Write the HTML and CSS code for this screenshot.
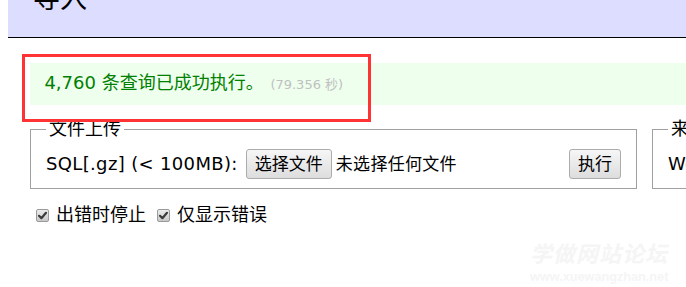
FILE: index.html
```html
<!DOCTYPE html>
<html lang="zh-CN">
<head>
<meta charset="utf-8">
<title>导入</title>
<link rel="stylesheet" href="styles.css">
</head>
<body>
<h2 class="title">导入</h2>
<div class="content">
  <div class="message">4,760 条查询已成功执行。 <span class="time">(79.356 秒)</span></div>
  <div class="forms">
    <fieldset class="box box-upload">
      <legend>文件上传</legend>
      <div class="row">
        <span class="label">SQL[.gz] (&lt; 100MB):</span>
        <span class="btn btn-file">选择文件</span>
        <span class="nofile">未选择任何文件</span>
        <span class="btn btn-run">执行</span>
      </div>
    </fieldset>
    <fieldset class="box box-server">
      <legend>来自服务器</legend>
      <div class="row">
        <span class="label">Webserver file adminer.sql</span>
      </div>
    </fieldset>
  </div>
  <div class="options">
    <span class="cb"><svg viewBox="0 0 13 13" width="13" height="13"><path d="M3 6.8 L5.4 9.2 L10 3.8" fill="none" stroke="#3c3c3c" stroke-width="2.2" stroke-linecap="round" stroke-linejoin="round"/></svg></span>
    <span class="opt">出错时停止</span>
    <span class="cb"><svg viewBox="0 0 13 13" width="13" height="13"><path d="M3 6.8 L5.4 9.2 L10 3.8" fill="none" stroke="#3c3c3c" stroke-width="2.2" stroke-linecap="round" stroke-linejoin="round"/></svg></span>
    <span class="opt">仅显示错误</span>
  </div>
</div>
<div class="annotation"></div>
<div class="watermark">
  <div class="wm-cn">学做网站论坛</div>
  <div class="wm-url">www.xuewangzhan.net</div>
</div>
</body>
</html>
```
FILE: styles.css
```css
html, body {
  margin: 0;
  padding: 0;
  overflow: hidden;
}
body {
  width: 686px;
  height: 287px;
  position: relative;
  background: #fff;
  color: #000;
  font-family: "DejaVu Sans", "Noto Sans CJK SC", sans-serif;
  font-size: 18px;
  line-height: 22.5px;
}
.title {
  margin: -40px 0 0 8px;
  padding: 21.6px 25px;
  font-size: 27px;
  line-height: 33.75px;
  font-weight: normal;
  background: #ddf;
  border-bottom: 1px solid #000;
}
.content {
  padding-left: 30px;
}
.message {
  margin-top: 25px;
  padding: 9px 14.4px;
  background: #efe;
  color: #008000;
  white-space: nowrap;
}
.time {
  color: #c0c0c0;
  font-size: 13px;
  margin-left: 1px;
}
.forms {
  display: flex;
  gap: 15px;
  margin-top: 13px;
  white-space: nowrap;
}
.box {
  margin: 0;
  padding: 8px 15px 9.5px;
  border: 1px solid #a0a0a0;
  box-sizing: border-box;
  min-width: 0;
  flex: none;
}
.box legend {
  padding: 0 3px;
  line-height: 22.5px;
}
.box-upload {
  width: 607px;
}
.box-server {
  width: 400px;
}
.row {
  display: flex;
  align-items: center;
  height: 30px;
}
.label {
  letter-spacing: 0.35px;
}
.btn {
  display: inline-flex;
  align-items: center;
  justify-content: center;
  box-sizing: border-box;
  height: 30px;
  padding: 0 8px;
  border: 1px solid #acacac;
  border-radius: 3px;
  background: linear-gradient(#f6f6f6, #dddddd);
  font-size: 17px;
}
.btn-file {
  margin-left: 8px;
}
.nofile {
  margin-left: 4px;
  font-size: 17px;
  letter-spacing: 0.3px;
}
.btn-run {
  margin-left: auto;
}
.options {
  display: flex;
  align-items: center;
  height: 22.5px;
  margin-top: 15px;
}
.cb {
  display: block;
  width: 13px;
  height: 13px;
  box-sizing: border-box;
  border: 1px solid #9a9a9a;
  border-radius: 2px;
  background: linear-gradient(#ececec, #c8c8c8);
  margin: 0 7px 0 6px;
  overflow: hidden;
}
.cb svg {
  display: block;
  margin: -1px 0 0 -1px;
}
.opt {
  margin-right: 5px;
}
.annotation {
  position: absolute;
  left: 22px;
  top: 54px;
  width: 349px;
  height: 68px;
  box-sizing: border-box;
  border: 3px solid #f33;
}
.watermark {
  position: absolute;
  left: 530px;
  top: 239px;
  color: #f5f5f5;
}
.wm-cn {
  font-family: "Noto Sans CJK SC", sans-serif;
  font-size: 22px;
  line-height: 26px;
  font-weight: bold;
  font-style: italic;
  letter-spacing: 1px;
}
.wm-url {
  font-family: "Liberation Sans", sans-serif;
  font-size: 12.7px;
  line-height: 15px;
  font-weight: bold;
  margin-top: 5px;
}
```
